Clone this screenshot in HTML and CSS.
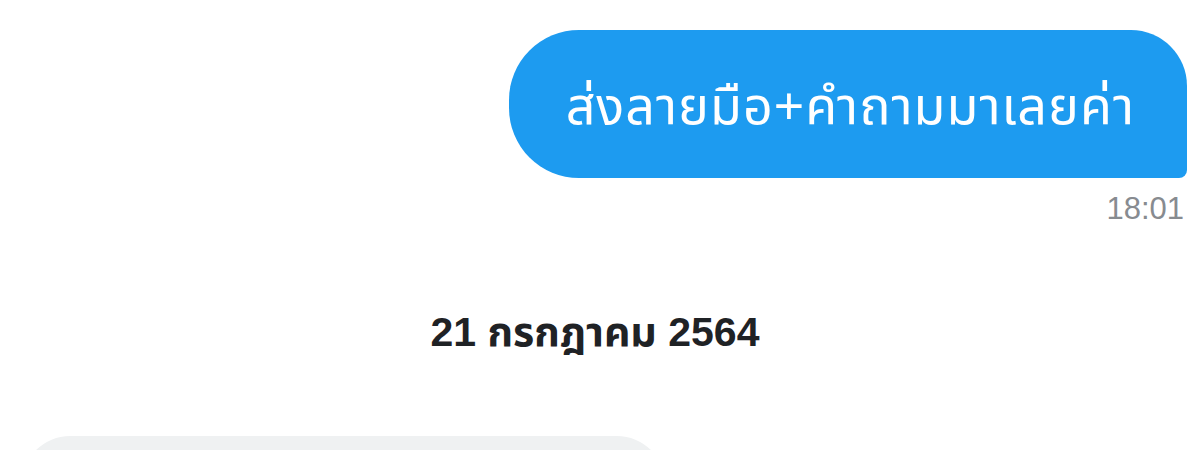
FILE: index.html
```html
<!DOCTYPE html>
<html lang="th">
<head>
  <meta charset="UTF-8" />
  <title>แชท</title>
  <link rel="stylesheet" href="styles.css">
</head>
<body>
  <main class="chat">
    <div class="msg msg--out">
      <div class="msg-bubble">ส่งลายมือ+คำถามมาเลยค่า</div>
      <span class="msg-time">18:01</span>
    </div>

    <div class="chat-date">21 กรกฎาคม 2564</div>

    <div class="msg msg--in">
      <div class="msg-bubble"></div>
    </div>
  </main>
</body>
</html>
```

FILE: styles.css
```css
* { box-sizing: border-box; margin: 0; padding: 0; }

html, body {
  background-color: #fff;
  font-family: "Liberation Sans", "Noto Sans Thai", "Noto Sans", sans-serif;
  overflow: hidden;
}

.chat {
  display: flex;
  flex-direction: column;
  padding: 30px 13px 0 20px;
}

.msg {
  display: flex;
  flex-direction: column;
}

.msg--out {
  align-items: flex-end;
}

.msg--out .msg-bubble {
  background-color: #1d9bf0;
  color: #fff;
  font-size: 52px;
  letter-spacing: 1px;
  white-space: nowrap;
  height: 148px;
  display: flex;
  align-items: center;
  padding: 8px 52px 0 57px;
  border-radius: 70px 56px 8px 70px;
}

.msg-time {
  margin-top: 14px;
  font-size: 31px;
  line-height: 34px;
  color: #878b90;
  margin-right: 3px;
}

.chat-date {
  text-align: center;
  font-size: 41px;
  line-height: 44px;
  font-weight: bold;
  color: #1f2225;
  margin-top: 84px;
  margin-right: 17px;
}

.msg--in {
  align-items: flex-start;
  margin-top: 82px;
}

.msg--in .msg-bubble {
  width: 643px;
  height: 120px;
  background-color: #eff1f2;
  border-radius: 48px;
  margin-left: 2px;
}
```
